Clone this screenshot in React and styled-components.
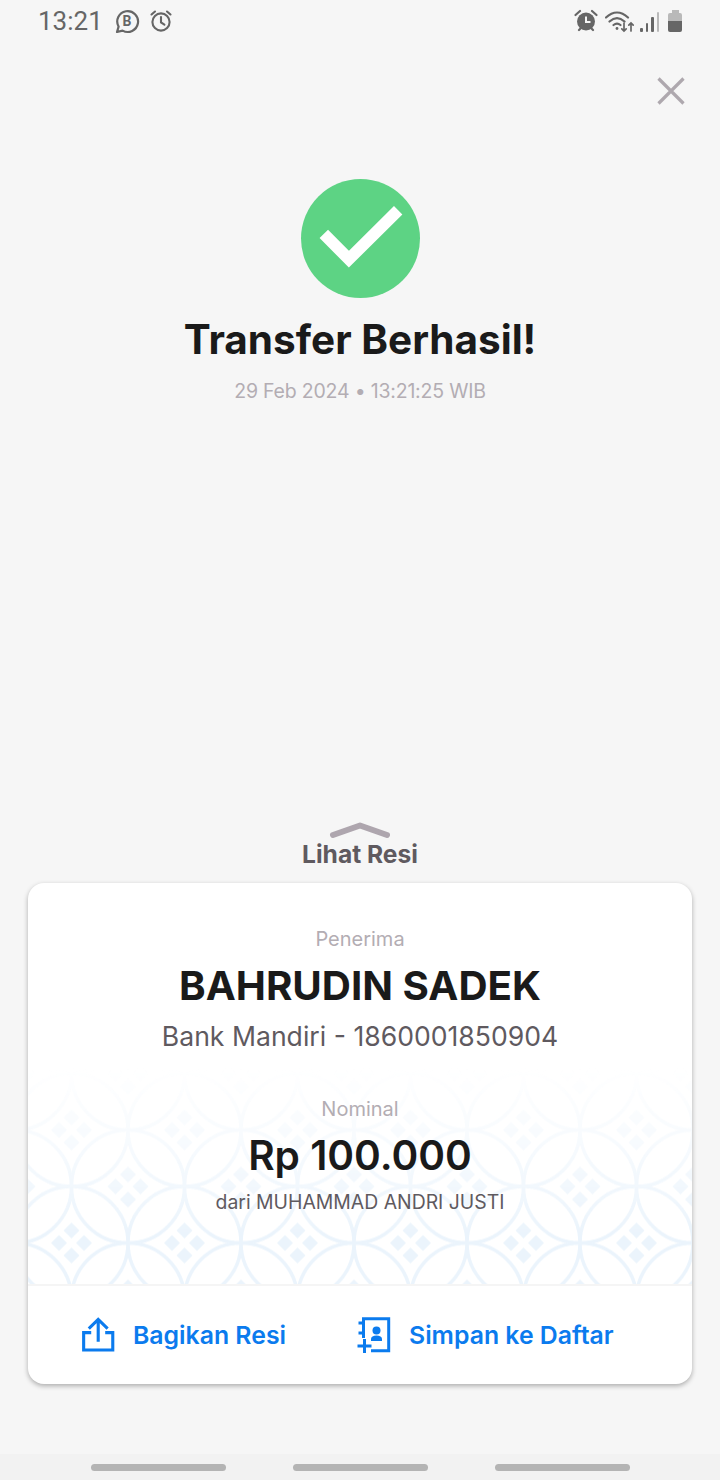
import styled, { createGlobalStyle } from 'styled-components';

const GlobalStyle = createGlobalStyle`
  html, body {
    margin: 0;
    padding: 0;
    background: #f6f6f6;
  }
`;

const App = () => {
  return (
    <Screen>
      <GlobalStyle />
      <StatusBar>
        <StatusLeft>
          <Clock>13:21</Clock>
          <svg width="26" height="26" viewBox="0 0 26 26" fill="none">
            <path d="M3 24l1.600-5.400A10.400 10.400 0 1 1 8.600 22.600z" stroke="#666" strokeWidth="2.200" strokeLinejoin="round" />
            <text x="13" y="18" textAnchor="middle" fontFamily="Roboto, sans-serif" fontWeight="700" fontSize="14" fill="#666">B</text>
          </svg>
          <svg width="24" height="24" viewBox="0 0 24 24" fill="none" stroke="#666" strokeWidth="2.100" strokeLinecap="round">
            <circle cx="12" cy="13" r="8.600" />
            <path d="M12 8v5.400l3.400 2.200M2.500 5.500L6 2.500M21.500 5.500L18 2.500" />
          </svg>
        </StatusLeft>
        <StatusRight>
          <svg width="24" height="24" viewBox="0 0 24 24" fill="none">
            <circle cx="12" cy="12.500" r="9" fill="#666" />
            <path d="M12 7.500v5.400h4.500" stroke="#f6f6f6" strokeWidth="2" />
            <path d="M1.500 6L6 2M22.500 6L18 2M5 21l2-2M19 21l-2-2" stroke="#666" strokeWidth="2.200" strokeLinecap="round" />
          </svg>
          <WifiIcon width="30" height="24" viewBox="0 0 30 24" fill="none" stroke="#666" strokeWidth="2.200" strokeLinecap="round">
            <path d="M1 8.500C8 2 16 2 23 8.500M4.500 12.500C9.500 8 14.500 8 19.500 12.500M8.500 16c2.500-2 4.500-2 7 0" />
            <circle cx="12" cy="19.500" r="1.400" fill="#666" stroke="none" />
            <path d="M19 14v8M16.800 19.800L19 22l2.200-2.200M26 22v-8M23.800 16.200L26 14l2.200 2.200" strokeWidth="1.700" />
          </WifiIcon>
          <SignalBars>
            <SignalBar $height={4} />
            <SignalBar $height={9} />
            <SignalBar $height={15} />
            <SignalBar $height={20} $faint />
          </SignalBars>
          <Battery>
            <BatteryCap />
            <BatteryBody />
          </Battery>
        </StatusRight>
      </StatusBar>

      <CloseRow>
        <svg width="30" height="30" viewBox="0 0 30 30" fill="none" stroke="#aea8ae" strokeWidth="3.200">
          <path d="M2.500 2.500l25 25M27.500 2.500l-25 25" />
        </svg>
      </CloseRow>

      <Hero>
        <CheckBadge>
          <svg width="120" height="120" viewBox="0 0 120 120" fill="none">
            <path d="M23 54.800L48.300 80.300L98 31" stroke="#fff" strokeWidth="12" />
          </svg>
        </CheckBadge>
        <Title>Transfer Berhasil!</Title>
        <DateText>29 Feb 2024 • 13:21:25 WIB</DateText>
      </Hero>

      <Spacer />

      <Peek>
        <svg width="62" height="18" viewBox="0 0 62 18" fill="none">
          <path d="M4 13L31 3.500L58 13" stroke="#aea6ae" strokeWidth="6" strokeLinecap="round" strokeLinejoin="round" />
        </svg>
        <PeekLabel>Lihat Resi</PeekLabel>
      </Peek>

      <Card>
        <CardBody>
          <PatternLayer width="664" height="240" viewBox="0 0 664 240">
            <defs>
              <pattern id="kawung" width="113" height="113" patternUnits="userSpaceOnUse" x="-13" y="29.500">
                <g fill="none" stroke="#ebf4fc" strokeWidth="3.500">
                  <circle cx="56.500" cy="56.500" r="56.500" />
                  <circle cx="0" cy="0" r="56.500" />
                  <circle cx="113" cy="0" r="56.500" />
                  <circle cx="0" cy="113" r="56.500" />
                  <circle cx="113" cy="113" r="56.500" />
                </g>
                <g fill="#ebf4fc">
                  <path d="M56.500 36l8 8-8 8-8-8zM56.500 61l8 8-8 8-8-8zM44 48.500l8 8-8 8-8-8zM69 48.500l8 8-8 8-8-8z" />
                  <path d="M0 -20l8 8-8 8-8-8zM0 5l8 8-8 8-8-8zM113 -20l8 8-8 8-8-8zM113 5l8 8-8 8-8-8zM12.500 -8l8 8-8 8-8-8zM100.500 -8l8 8-8 8-8-8zM12.500 105l8 8-8 8-8-8zM100.500 105l8 8-8 8-8-8zM0 93l8 8-8 8-8-8zM113 93l8 8-8 8-8-8z" />
                </g>
              </pattern>
              <linearGradient id="fade" x1="0" y1="0" x2="0" y2="1">
                <stop offset="0.1" stopColor="#fff" stopOpacity="0" />
                <stop offset="0.45" stopColor="#fff" stopOpacity="0.45" />
                <stop offset="0.8" stopColor="#fff" stopOpacity="1" />
              </linearGradient>
              <mask id="fadeMask">
                <rect width="664" height="240" fill="url(#fade)" />
              </mask>
            </defs>
            <rect width="664" height="240" fill="url(#kawung)" mask="url(#fadeMask)" />
          </PatternLayer>
          <Content>
            <Caption>Penerima</Caption>
            <Name>BAHRUDIN SADEK</Name>
            <Account>Bank Mandiri - 1860001850904</Account>
            <NominalCaption>Nominal</NominalCaption>
            <Amount>Rp 100.000</Amount>
            <Sender>dari MUHAMMAD ANDRI JUSTI</Sender>
          </Content>
        </CardBody>
        <Actions>
          <Action $width={204}>
            <svg width="34" height="38" viewBox="0 0 34 38" fill="none" stroke="#0b7bee" strokeWidth="3.200" strokeLinejoin="miter">
              <path d="M9.500 16.500H1.700v18h30v-18h-7.800" />
              <path d="M16.700 26V3.500M7 12.500L16.700 3l9.700 9.500" />
            </svg>
            <ActionLabel>Bagikan Resi</ActionLabel>
          </Action>
          <Action $width={259}>
            <svg width="34" height="36" viewBox="0 0 34 36" fill="none" stroke="#0b7bee" strokeWidth="3">
              <path d="M6.500 21V1.700H31.700v32H14" />
              <path d="M1.500 6h5M1.500 16h5M0.500 29h14M7.500 22v14" />
              <circle cx="19.500" cy="13.500" r="4" fill="#0b7bee" stroke="none" />
              <path d="M14 24v-2c0-2.200 2.200-3.500 5.500-3.500s5.500 1.300 5.500 3.500v2z" fill="#0b7bee" stroke="none" />
            </svg>
            <ActionLabel>Simpan ke Daftar</ActionLabel>
          </Action>
        </Actions>
      </Card>

      <NavBar>
        <NavPill />
        <NavPill />
        <NavPill />
      </NavBar>
    </Screen>
  );
};

const Screen = styled.div`
  width: 720px;
  height: 1480px;
  display: flex;
  flex-direction: column;
  background: #f6f6f6;
  overflow: hidden;
  font-family: Inter, "Liberation Sans", sans-serif;
`;

const StatusBar = styled.div`
  height: 42px;
  flex: none;
  display: flex;
  align-items: center;
  justify-content: space-between;
  padding: 0 38px 0 38px;
`;

const StatusLeft = styled.div`
  display: flex;
  align-items: center;
  gap: 9px;
`;

const StatusRight = styled.div`
  display: flex;
  align-items: center;
  gap: 5px;
`;

const Clock = styled.span`
  font-family: Roboto, sans-serif;
  font-size: 26px;
  color: #666;
  margin-right: 2px;
`;

const WifiIcon = styled.svg`
  margin-left: 2px;
`;

const SignalBars = styled.div`
  display: flex;
  align-items: flex-end;
  gap: 3px;
  height: 21px;
`;

const SignalBar = styled.span`
  width: 2.500px;
  height: ${(p) => p.$height}px;
  background: ${(p) => (p.$faint ? '#b9b9b9' : '#666')};
  border-radius: 1px;
`;

const Battery = styled.div`
  width: 14px;
  margin-left: 4px;
  display: flex;
  flex-direction: column;
  align-items: center;
`;

const BatteryCap = styled.span`
  width: 7px;
  height: 3px;
  background: #b9b9b9;
`;

const BatteryBody = styled.span`
  width: 14px;
  height: 19px;
  border-radius: 2px;
  background: linear-gradient(#b9b9b9 0 8px, #666 8px);
`;

const CloseRow = styled.div`
  display: flex;
  justify-content: flex-end;
  padding: 34px 34px 0 0;
`;

const Hero = styled.div`
  margin-top: 73px;
  display: flex;
  flex-direction: column;
  align-items: center;
`;

const CheckBadge = styled.div`
  width: 119px;
  height: 119px;
  border-radius: 50%;
  background: #5dd384;
  display: flex;
  align-items: center;
  justify-content: center;
`;

const Title = styled.h1`
  margin: 18px 0 0;
  font-size: 40.500px;
  line-height: 48px;
  font-weight: 700;
  color: #1a1a1a;
`;

const DateText = styled.div`
  margin-top: 14px;
  font-size: 19.500px;
  letter-spacing: -0.200px;
  line-height: 26px;
  color: #b3adb3;
`;

const Spacer = styled.div`
  flex: 1;
`;

const Peek = styled.div`
  display: flex;
  flex-direction: column;
  align-items: center;
`;

const PeekLabel = styled.div`
  margin-top: -1px;
  font-size: 24.600px;
  line-height: 30px;
  font-weight: 700;
  color: #5f5a5f;
`;

const Card = styled.div`
  margin: 14px 28px 0;
  height: 501px;
  flex: none;
  display: flex;
  flex-direction: column;
  background: #fff;
  border-radius: 16px;
  box-shadow: 0 2px 5px rgba(0, 0, 0, 0.3);
  overflow: hidden;
`;

const CardBody = styled.div`
  position: relative;
  height: 401px;
  flex: none;
  border-bottom: 2px solid #f5f5f5;
`;

const PatternLayer = styled.svg`
  position: absolute;
  left: 0;
  bottom: 0;
`;

const Content = styled.div`
  position: relative;
  padding-top: 43px;
  display: flex;
  flex-direction: column;
  align-items: center;
`;

const Caption = styled.div`
  font-size: 20px;
  line-height: 26px;
  color: #b3adb3;
`;

const NominalCaption = styled(Caption)`
  margin-top: 43px;
`;

const Name = styled.div`
  margin-top: 10px;
  font-size: 40.300px;
  line-height: 48px;
  font-weight: 700;
  color: #1a1a1a;
`;

const Account = styled.div`
  margin-top: 9px;
  font-size: 26.600px;
  line-height: 34px;
  color: #5f5a5f;
`;

const Amount = styled.div`
  margin-top: 10px;
  font-size: 40.600px;
  line-height: 48px;
  font-weight: 600;
  color: #1a1a1a;
`;

const Sender = styled.div`
  margin-top: 9px;
  font-size: 19.400px;
  line-height: 26px;
  color: #5f5a5f;
`;

const Actions = styled.div`
  flex: 1;
  display: flex;
  align-items: center;
  padding-left: 54px;
  gap: 71px;
`;

const Action = styled.div`
  width: ${(p) => p.$width}px;
  display: flex;
  align-items: center;
  gap: 18px;
`;

const ActionLabel = styled.span`
  font-size: 24.800px;
  font-weight: 600;
  color: #0b7bee;
  white-space: nowrap;
`;

const NavBar = styled.div`
  margin-top: 70px;
  height: 26px;
  flex: none;
  display: flex;
  align-items: center;
  justify-content: center;
  gap: 67px;
  background: #f2f2f2;
`;

const NavPill = styled.span`
  width: 135px;
  height: 7px;
  border-radius: 4px;
  background: #b4b4b4;
`;

export default App;
